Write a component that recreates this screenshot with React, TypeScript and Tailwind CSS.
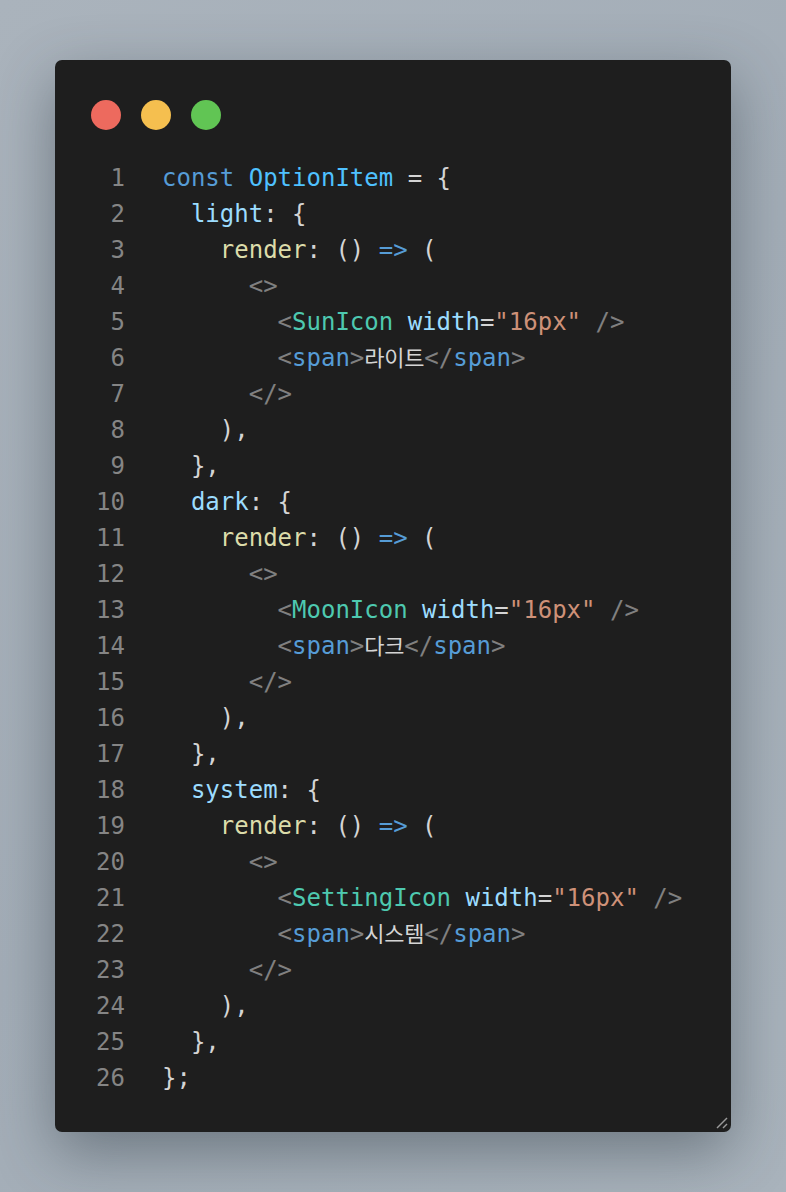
import React from "react";

type Tok = [string, string];

const C = {
  kw: "text-[#569cd6]",
  cst: "text-[#4fc1ff]",
  prop: "text-[#9cdcfe]",
  fn: "text-[#dcdcaa]",
  p: "text-[#d4d4d4]",
  br: "text-[#808080]",
  comp: "text-[#4ec9b0]",
  tag: "text-[#569cd6]",
  str: "text-[#ce9178]",
  ko: "ko",
};

const sp = (n: number): Tok => [" ".repeat(n), C.p];

const component = (indent: number, name: string): Tok[] => [
  sp(indent),
  ["<", C.br],
  [name, C.comp],
  [" ", C.p],
  ["width", C.prop],
  ["=", C.p],
  ['"16px"', C.str],
  [" ", C.p],
  ["/>", C.br],
];

const spanLine = (indent: number, text: string): Tok[] => [
  sp(indent),
  ["<", C.br],
  ["span", C.tag],
  [">", C.br],
  [text, C.ko],
  ["</", C.br],
  ["span", C.tag],
  [">", C.br],
];

const block = (key: string, name: string, text: string): Tok[][] => [
  [sp(2), [key, C.prop], [": {", C.p]],
  [sp(4), ["render", C.fn], [": () ", C.p], ["=>", C.kw], [" (", C.p]],
  [sp(6), ["<>", C.br]],
  component(8, name),
  spanLine(8, text),
  [sp(6), ["</>", C.br]],
  [sp(4), ["),", C.p]],
  [sp(2), ["},", C.p]],
];

const lines: Tok[][] = [
  [["const", C.kw], [" ", C.p], ["OptionItem", C.cst], [" = {", C.p]],
  ...block("light", "SunIcon", "라이트"),
  ...block("dark", "MoonIcon", "다크"),
  ...block("system", "SettingIcon", "시스템"),
  [["};", C.p]],
];

export default function App() {
  return (
    <div className="min-h-[1192px] w-full bg-[linear-gradient(135deg,#aab3bc_0%,#a3adb7_50%,#a9b3bc_100%)] flex justify-center pt-[60px] pb-[60px]">
      <div
        className="relative w-[676px] h-[1072px] bg-[#1e1e1e] rounded-[7px] shadow-[0_20px_60px_rgba(40,50,60,0.45)] pt-[40px]"
        style={{ fontFamily: '"DejaVu Sans Mono", "Liberation Mono", monospace' }}
      >
        <div className="flex gap-[20px] pl-[36px]">
          <div className="w-[30px] h-[30px] rounded-full bg-[#ed6a5e]" />
          <div className="w-[30px] h-[30px] rounded-full bg-[#f5bf4f]" />
          <div className="w-[30px] h-[30px] rounded-full bg-[#61c554]" />
        </div>
        <div className="mt-[30px] text-[24px] leading-[36px]">
          {lines.map((toks, i) => (
            <div key={i} className="flex h-[36px] overflow-visible">
              <div className="w-[70px] text-right text-[#858585] shrink-0">{i + 1}</div>
              <div className="pl-[37px] whitespace-pre">
                {toks.map((t, j) =>
                  t[1] === "ko" ? (
                    <span
                      key={j}
                      className="text-[#d4d4d4] text-[22px] leading-none"
                      style={{ fontFamily: '"Noto Sans CJK KR", sans-serif' }}
                    >
                      {Array.from(t[0]).map((ch, k) => (
                        <span key={k} className="inline-block w-[20px] text-center leading-none">
                          {ch}
                        </span>
                      ))}
                    </span>
                  ) : (
                    <span key={j} className={t[1]}>
                      {t[0]}
                    </span>
                  )
                )}
              </div>
            </div>
          ))}
        </div>
        <svg
          className="absolute right-[2px] bottom-[2px]"
          width="14"
          height="14"
          viewBox="0 0 14 14"
        >
          <line x1="2" y1="12" x2="12" y2="2" stroke="#9a9a9a" strokeWidth="1.5" />
          <line x1="8" y1="12" x2="12" y2="8" stroke="#9a9a9a" strokeWidth="1.5" />
        </svg>
      </div>
    </div>
  );
}
